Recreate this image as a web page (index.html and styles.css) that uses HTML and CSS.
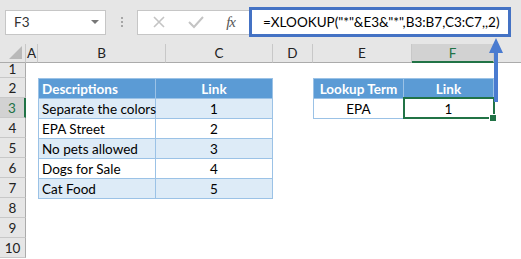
FILE: index.html
```html
<!DOCTYPE html>
<html lang="en">
<head>
    <meta charset="UTF-8">
    <title>XLOOKUP wildcard</title>
    <link rel="stylesheet" href="styles.css">
</head>
<body>

    <div class="window">
        <div class="formula-bar">
            <div class="name-box">
                <span>F3</span>
                <span class="drop"></span>
            </div>
            <div class="grip"><i></i><i></i><i></i></div>
            <div class="fx-box">
                <svg width="14" height="14" viewBox="0 0 14 14"><path d="M2 2L12 12M12 2L2 12" stroke="#c4c4c4" stroke-width="1.6" fill="none"/></svg>
                <svg width="16" height="14" viewBox="0 0 16 14"><path d="M1 7L6 12L15 2" stroke="#c4c4c4" stroke-width="2" fill="none"/></svg>
                <span class="fx">fx</span>
            </div>
            <div class="formula">=XLOOKUP("*"&amp;E3&amp;"*",B3:B7,C3:C7,,2)</div>
        </div>

        <div class="sheet">
            <div class="corner"><span></span></div>
            <div class="col-head">A</div>
            <div class="col-head">B</div>
            <div class="col-head">C</div>
            <div class="col-head">D</div>
            <div class="col-head">E</div>
            <div class="col-head active">F</div>
            <div class="col-head last"></div>

            <div class="row-head short">1</div>
            <div class="row-head">2</div>
            <div class="row-head active">3</div>
            <div class="row-head">4</div>
            <div class="row-head">5</div>
            <div class="row-head">6</div>
            <div class="row-head">7</div>
            <div class="row-head">8</div>
            <div class="row-head">9</div>
            <div class="row-head">10</div>

            <table class="data desc">
                <tr><th class="left">Descriptions</th><th>Link</th></tr>
                <tr class="band"><td class="left">Separate the colors</td><td>1</td></tr>
                <tr><td class="left">EPA Street</td><td>2</td></tr>
                <tr class="band"><td class="left">No pets allowed</td><td>3</td></tr>
                <tr><td class="left">Dogs for Sale</td><td>4</td></tr>
                <tr class="band"><td class="left">Cat Food</td><td>5</td></tr>
            </table>

            <table class="data lookup">
                <tr><th>Lookup Term</th><th>Link</th></tr>
                <tr><td>EPA</td><td class="selected">1</td></tr>
            </table>
        </div>

        <svg class="arrow" width="20" height="66" viewBox="0 0 20 66">
            <path d="M10 0L17 15H12V64H8V15H3Z" fill="#4a7bd0"/>
        </svg>
    </div>

</body>
</html>
```

FILE: styles.css
```css
* {
    box-sizing: border-box;
}
body {
    margin: 0;
    font-family: Lato, "Liberation Sans", sans-serif;
    font-size: 13.5px;
    color: #000;
    background: #fff;
}
.window {
    position: relative;
    width: 521px;
    height: 259px;
    overflow: hidden;
}

/* formula bar */
.formula-bar {
    display: flex;
    align-items: center;
    height: 44px;
    padding-left: 5px;
    background: #e6e6e6;
}
.name-box {
    display: flex;
    align-items: center;
    justify-content: space-between;
    width: 101px;
    height: 25px;
    padding: 0 6px 0 8px;
    background: #fff;
    border: 1px solid #c6c6c6;
    color: #333;
}
.drop {
    width: 0;
    height: 0;
    border-left: 4px solid transparent;
    border-right: 4px solid transparent;
    border-top: 4px solid #777;
}
.grip {
    display: flex;
    flex-direction: column;
    align-items: center;
    gap: 2px;
    width: 31px;
}
.grip i {
    width: 2px;
    height: 2px;
    background: #a6a6a6;
}
.fx-box {
    display: flex;
    align-items: center;
    justify-content: space-between;
    width: 113px;
    height: 25px;
    padding: 0 14px 0 14px;
    background: #fff;
    border: 1px solid #c6c6c6;
}
.fx {
    font-family: "Liberation Serif", serif;
    font-style: italic;
    font-size: 15px;
    color: #555;
    letter-spacing: -1px;
}
.formula {
    display: flex;
    align-items: center;
    width: 262px;
    height: 30px;
    margin-left: -1px;
    padding-left: 11px;
    background: #fff;
    border: 3px solid #4472c4;
    white-space: nowrap;
}

/* sheet grid */
.sheet {
    display: grid;
    grid-template-columns: 26px 12px 128px 107px 40px 99px 82px 1fr;
    grid-template-rows: 19px 15px repeat(9, 20px);
}
.corner {
    grid-row: 1;
    position: relative;
    background: #e6e6e6;
    border-right: 1px solid #c8c8c8;
    border-bottom: 1px solid #ababab;
}
.corner span {
    position: absolute;
    right: 3px;
    bottom: 3px;
    width: 0;
    height: 0;
    border-left: 13px solid transparent;
    border-bottom: 13px solid #b9b9b9;
}
.col-head {
    grid-row: 1;
    display: flex;
    align-items: center;
    justify-content: center;
    background: #e6e6e6;
    border-right: 1px solid #c8c8c8;
    border-bottom: 1px solid #ababab;
    color: #222;
}
.col-head.active {
    background: #d2d2d2;
    border-bottom: 2px solid #217346;
    color: #217346;
}
.col-head.last {
    border-right: none;
}
.row-head {
    grid-column: 1;
    display: flex;
    align-items: center;
    justify-content: center;
    background: #e6e6e6;
    border-right: 1px solid #ababab;
    border-bottom: 1px solid #c8c8c8;
    color: #222;
}
.row-head.short {
    align-items: flex-end;
}
.row-head.active {
    background: #d2d2d2;
    border-right: 2px solid #217346;
    color: #217346;
}

/* data tables */
.data {
    border-collapse: collapse;
    table-layout: fixed;
    width: 100%;
}
.desc {
    grid-column: 3 / 5;
    grid-row: 3 / 9;
}
.lookup {
    grid-column: 6 / 8;
    grid-row: 3 / 5;
}
.data th,
.data td {
    height: 20px;
    padding: 0 3px;
    border: 1px solid #9bc2e6;
    text-align: center;
    white-space: nowrap;
    line-height: 18px;
}
.data th {
    background: #5b9bd5;
    color: #fff;
    font-weight: bold;
}
.data .left {
    text-align: left;
}
.band td {
    background: #ddebf7;
}
.selected {
    position: relative;
}
.selected::after {
    content: "";
    position: absolute;
    left: -1px;
    top: -2px;
    right: -2px;
    bottom: -1px;
    border: 2px solid #217346;
}
.selected::before {
    content: "";
    position: absolute;
    right: -4px;
    bottom: -4px;
    width: 6px;
    height: 6px;
    background: #217346;
    border: 1px solid #fff;
    z-index: 1;
}

/* callout arrow from formula to cell */
.arrow {
    position: absolute;
    left: 486px;
    top: 38px;
}
```
